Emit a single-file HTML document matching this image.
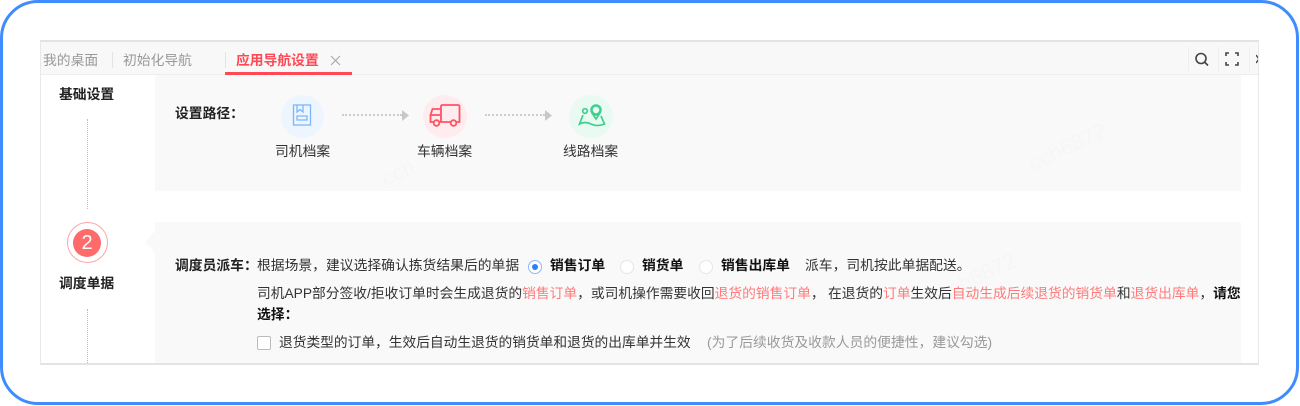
<!DOCTYPE html>
<html lang="zh">
<head>
<meta charset="utf-8">
<style>
html,body{margin:0;padding:0;background:#fff}
#p{position:relative;width:1300px;height:406px;overflow:hidden;background:#fff;font-family:"Liberation Sans","Noto Sans CJK SC",sans-serif;font-size:13.8px;color:#333}
.a{position:absolute}
.t{position:absolute;white-space:nowrap;line-height:20px}
.b{font-weight:700;color:#222}
.r{color:#ff7b7b}
.w{position:absolute;white-space:nowrap;color:#f6f6f6;font-size:22px;transform:rotate(-25deg)}
</style>
</head>
<body>
<div id="p">
<div class="a" style="left:0;top:0;width:1293px;height:399px;border:3px solid #3f8cff;border-radius:38px"></div>

<div class="a" style="left:40px;top:40px;width:1217px;height:321px;border:1px solid #e8e8e8;border-top:2px solid #e3e3e3;border-bottom:2px solid #e3e3e3;background:#fff;overflow:hidden">
  <div class="a" style="left:0;top:0;width:1218px;height:32px;background:#f8f8f8;border-bottom:1px solid #eee"></div>
  <div class="t" style="left:2px;top:9px;color:#999">我的桌面</div>
  <div class="a" style="left:71px;top:10px;width:1px;height:16px;background:#e4e4e4"></div>
  <div class="t" style="left:82px;top:9px;color:#999">初始化导航</div>
  <div class="a" style="left:184px;top:10px;width:1px;height:16px;background:#e4e4e4"></div>
  <div class="t" style="left:195px;top:9px;color:#ff4a55;font-weight:700">应用导航设置</div>
  <svg class="a" style="left:288px;top:12px" width="13" height="13" viewBox="0 0 13 13"><path d="M2 2L11 11M11 2L2 11" stroke="#aaa" stroke-width="1.2" fill="none"/></svg>
  <div class="a" style="left:184px;top:30px;width:127px;height:3px;background:#ff4a55"></div>

  <div class="a" style="left:1147px;top:5px;width:1px;height:24px;background:#eee"></div>
  <svg class="a" style="left:1154px;top:10px" width="15" height="15" viewBox="0 0 15 15"><circle cx="6" cy="6.500" r="5" stroke="#444" stroke-width="1.600" fill="none"/><path d="M10 10.500L13 13.500" stroke="#444" stroke-width="1.600"/></svg>
  <div class="a" style="left:1177px;top:5px;width:1px;height:24px;background:#eee"></div>
  <svg class="a" style="left:1184px;top:10px" width="14" height="14" viewBox="0 0 14 14"><path d="M1 4V1H4M10 1H13V4M13 10V13H10M4 13H1V10" stroke="#444" stroke-width="1.600" fill="none"/></svg>
  <div class="a" style="left:1208px;top:5px;width:1px;height:24px;background:#eee"></div>
  <svg class="a" style="left:1215px;top:11px" width="2" height="12" viewBox="0 0 2 12"><path d="M0 2L6 10M6 2L0 10" stroke="#444" stroke-width="1.400" fill="none"/></svg>

  <div class="a" style="left:114px;top:33px;width:1086px;height:116px;background:#f9f9f9"></div>
  <div class="a" style="left:114px;top:180px;width:1086px;height:141px;background:#f9f9f9"></div>
  <svg class="a" style="left:104px;top:189px" width="10" height="22" viewBox="0 0 10 22"><path d="M10 0V22L0 11Z" fill="#f9f9f9"/></svg>

  <div class="w" style="left:340px;top:118px">cch</div>
  <div class="w" style="left:985px;top:92px">cch6872</div>
  <div class="w" style="left:895px;top:222px">cch6872</div>

  <div class="t b" style="left:18px;top:43px">基础设置</div>
  <div class="a" style="left:46px;top:77px;height:90px;border-left:1px dotted #bbb"></div>

  <div class="t b" style="left:134px;top:62px">设置路径：</div>

  <div class="a" style="left:240px;top:53px;width:43px;height:43px;border-radius:50%;background:#edf6ff"></div>
  <svg class="a" style="left:251px;top:61px" width="20" height="24" viewBox="0 0 20 24" fill="none" stroke="#7cb6fb" stroke-width="1.300"><rect x="1.500" y="2" width="17" height="20"/><path d="M5 2V9L8 6.500L11 9V2M5 13H15V17H5Z"/></svg>
  <div class="t" style="left:234px;top:100px">司机档案</div>

  <div class="a" style="left:301px;top:72px;width:60px;border-top:2px dotted #ccc"></div>
  <svg class="a" style="left:361px;top:68px" width="7" height="11" viewBox="0 0 7 11"><path d="M0 0L7 5.500L0 11Z" fill="#c8c8c8"/></svg>

  <div class="a" style="left:382px;top:53px;width:44px;height:43px;border-radius:50%;background:#ffecee"></div>
  <svg class="a" style="left:388px;top:61px" width="32" height="26" viewBox="0 0 32 26" fill="none" stroke="#ff5263" stroke-width="1.800"><path d="M12 6H3.500L1.500 12V19H5M10 19H22M27 19H30.500V3.500Q30.500 2 29 2H13.500Q12 2 12 3.500V19M1.500 12H12"/><circle cx="7.500" cy="20" r="2.800"/><circle cx="24.500" cy="20" r="2.800"/></svg>
  <div class="t" style="left:376px;top:100px">车辆档案</div>

  <div class="a" style="left:444px;top:72px;width:60px;border-top:2px dotted #ccc"></div>
  <svg class="a" style="left:504px;top:68px" width="7" height="11" viewBox="0 0 7 11"><path d="M0 0L7 5.500L0 11Z" fill="#c8c8c8"/></svg>

  <div class="a" style="left:528px;top:53px;width:44px;height:43px;border-radius:50%;background:#e9faf2"></div>
  <svg class="a" style="left:537px;top:61px" width="28" height="24" viewBox="0 0 28 24" fill="none" stroke="#3ecf8e" stroke-width="1.700"><circle cx="18" cy="7" r="4.500" stroke-width="2.500"/><path d="M14 10L18 16L22 10"/><circle cx="7" cy="8" r="2.300"/><path d="M5 12L1.500 21Q7 18 13 21Q19 24 26.500 21L23 13"/></svg>
  <div class="t" style="left:522px;top:100px">线路档案</div>

  <div class="a" style="left:26px;top:180px;width:39px;height:39px;border:1px solid #ffa5a5;border-radius:50%"></div>
  <div class="a" style="left:32px;top:187px;width:28px;height:28px;border-radius:50%;background:#ff6b6b;color:#fff;font-size:20px;line-height:28px;text-align:center">2</div>
  <div class="t b" style="left:18px;top:232px">调度单据</div>
  <div class="a" style="left:46px;top:267px;height:60px;border-left:1px dotted #bbb"></div>

  <div class="t b" style="left:134px;top:214px">调度员派车：</div>
  <div class="t" style="left:216px;top:214px">根据场景，建议选择确认拣货结果后的单据</div>

  <div class="a" style="left:487px;top:218px;width:12px;height:12px;border:1px solid #8bb8fa;border-radius:50%;background:#fff"></div>
  <div class="a" style="left:491px;top:222px;width:6px;height:6px;border-radius:50%;background:#2f7ef5"></div>
  <div class="t b" style="left:509px;top:214px;color:#111">销售订单</div>
  <div class="a" style="left:579px;top:218px;width:12px;height:12px;border:1px solid #e6e6e6;border-radius:50%;background:#fff"></div>
  <div class="t b" style="left:601px;top:214px;color:#111">销货单</div>
  <div class="a" style="left:658px;top:218px;width:12px;height:12px;border:1px solid #e6e6e6;border-radius:50%;background:#fff"></div>
  <div class="t b" style="left:680px;top:214px;color:#111">销售出库单</div>
  <div class="t" style="left:764px;top:214px">派车，司机按此单据配送。</div>

  <div class="t" style="left:216px;top:242px;font-size:13.750px">司机APP部分签收/拒收订单时会生成退货的<span class="r">销售订单</span>，或司机操作需要收回<span class="r">退货的销售订单</span>，</div>
  <div class="t" style="left:787px;top:242px;font-size:13.750px">在退货的<span class="r">订单</span>生效后<span class="r">自动生成后续退货的销货单</span>和<span class="r">退货出库单</span>，<span class="b" style="color:#111">请您</span></div>
  <div class="t b" style="left:216px;top:263px;color:#111">选择：</div>

  <div class="a" style="left:216px;top:294px;width:12px;height:12px;border:1px solid #bbb;border-radius:2px;background:#fff"></div>
  <div class="t" style="left:238px;top:291px;font-size:13.730px">退货类型的订单，生效后自动生退货的销货单和退货的出库单并生效</div>
  <div class="t" style="left:666px;top:291px;color:#999">(为了后续收货及收款人员的便捷性，建议勾选)</div>
</div>
</div>
</body>
</html>
